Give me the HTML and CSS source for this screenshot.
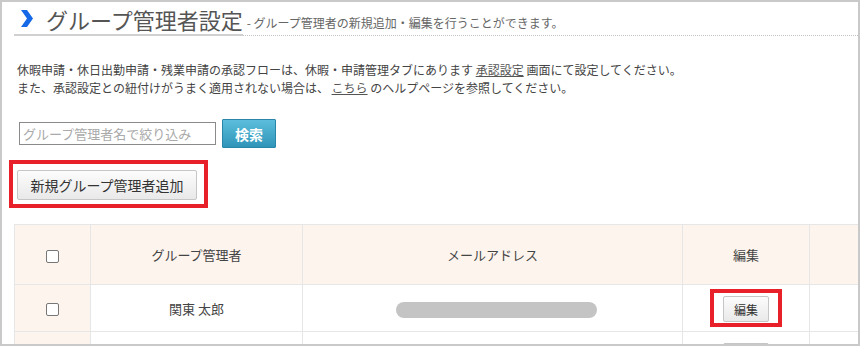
FILE: index.html
```html
<!DOCTYPE html>
<html lang="ja">
<head>
<meta charset="utf-8">
<title>グループ管理者設定</title>
<link rel="stylesheet" href="styles.css">
</head>
<body>
<div class="frame">
  <div class="heading">
    <h1 class="title">
      <svg class="chev" width="13" height="17" viewBox="0 0 13 17" aria-hidden="true"><path d="M1 0 L7 0 L13 8.5 L7 17 L1 17 L7 8.5 Z" fill="#1669e6"/></svg>
      <span>グループ管理者設定</span>
    </h1>
    <span class="sub">- グループ管理者の新規追加・編集を行うことができます。</span>
  </div>
  <div class="content">
    <p class="note">休暇申請・休日出勤申請・残業申請の承認フローは、休暇・申請管理タブにあります <a href="#">承認設定</a> 画面にて設定してください。<br>また、承認設定との紐付けがうまく適用されない場合は、 <a href="#">こちら</a> のヘルプページを参照してください。</p>
    <div class="search">
      <input class="filter" type="text" placeholder="グループ管理者名で絞り込み">
      <button class="btn-search" type="button">検索</button>
    </div>
    <div class="add-row">
      <button class="btn-plain btn-add mark mark-add" type="button">新規グループ管理者追加</button>
    </div>
  </div>
  <table class="list">
    <colgroup>
      <col class="c1"><col class="c2"><col class="c3"><col class="c4"><col class="c5">
    </colgroup>
    <thead>
      <tr>
        <th class="chk"><span class="box"></span></th>
        <th>グループ管理者</th>
        <th>メールアドレス</th>
        <th>編集</th>
        <th></th>
      </tr>
    </thead>
    <tbody>
      <tr>
        <td class="chk"><span class="box"></span></td>
        <td>関東 太郎</td>
        <td><span class="mask"></span></td>
        <td><button class="btn-plain btn-edit mark mark-edit" type="button">編集</button></td>
        <td></td>
      </tr>
      <tr>
        <td class="chk"><span class="box"></span></td>
        <td></td>
        <td></td>
        <td><button class="btn-plain btn-edit" type="button">編集</button></td>
        <td></td>
      </tr>
    </tbody>
  </table>
</div>
</body>
</html>
```

FILE: styles.css
```css
* { box-sizing: border-box; }
html, body { margin: 0; padding: 0; background: #fff; }
body {
  font-family: "Noto Sans CJK JP", "Noto Sans", sans-serif;
  color: #444;
}
.frame {
  width: 860px;
  height: 346px;
  border: 2px solid #c9c9c9;
  overflow: hidden;
  background: #fff;
}
.heading {
  margin: 0 0 0 12px;
  height: 34px;
  border-bottom: 1px dotted #c4c4c4;
  display: flex;
  align-items: flex-end;
}
.title {
  margin: 0 0 -1px 0;
  padding: 0 0 0 6px;
  height: 35px;
  display: flex;
  align-items: center;
  gap: 13px;
  font-size: 22px;
  font-weight: normal;
  color: #555;
  border-bottom: 2px solid #d0d0d0;
  line-height: 1;
}
.title span { padding-top: 2px; }
.chev { display: block; margin-top: 1px; }
.sub {
  font-size: 12px;
  color: #666;
  margin-left: 4px;
  padding-bottom: 6px;
  line-height: 1;
}
.content { padding: 0 0 0 15px; }
.note {
  margin: 25px 0 0 0;
  font-size: 12px;
  line-height: 18px;
  color: #444;
}
.note a { color: #555; text-decoration: underline; }
.search {
  display: flex;
  align-items: center;
  gap: 6px;
  margin: 22px 0 0 2px;
}
.filter {
  width: 197px;
  height: 23px;
  border: 1px solid #8a8a8a;
  padding: 0 3px;
  font-family: inherit;
  font-size: 13px;
  color: #444;
  outline: none;
}
.filter::placeholder { color: #aaa; }
.btn-search {
  width: 54px;
  height: 29px;
  border: 1px solid #2a86a8;
  border-radius: 1px;
  background: linear-gradient(#5cbedc, #2f95b8);
  color: #fff;
  font-family: inherit;
  font-size: 14px;
  font-weight: bold;
  padding: 0;
}
.add-row { margin-top: 22px; }
.btn-plain {
  border: 1px solid #c6c6c6;
  border-radius: 2px;
  background: linear-gradient(#fcfcfc, #e9e9e9);
  color: #333;
  font-family: inherit;
  padding: 0;
}
.btn-add {
  width: 180px;
  height: 30px;
  font-size: 14px;
}
.btn-edit {
  width: 46px;
  height: 26px;
  font-size: 12px;
}
.mark { position: relative; }
.mark::after {
  content: "";
  position: absolute;
  border: 4px solid #e8202a;
  pointer-events: none;
}
.mark-add::after { top: -11px; right: -12px; bottom: -9px; left: -9px; }
.mark-edit::after { top: -8px; right: -14px; bottom: -6px; left: -14px; }
.list {
  margin: 24px 0 0 12px;
  border-collapse: collapse;
  table-layout: fixed;
  width: 900px;
  font-size: 13px;
  color: #444;
}
.c1 { width: 76px; }
.c2 { width: 212px; }
.c3 { width: 380px; }
.c4 { width: 127px; }
.c5 { width: 105px; }
.list th, .list td {
  border: 1px solid #e6e6e6;
  text-align: center;
  vertical-align: middle;
  padding: 0;
  font-weight: normal;
}
.list thead tr { height: 60px; }
.list thead th { background: #fdf4ee; }
.list tbody tr { height: 47px; }
.list td { vertical-align: top; padding-top: 11px; }
.list td.chk, .list td:nth-child(2), .list td:nth-child(3) { vertical-align: middle; padding-top: 0; }
.list .chk { background: #fdf4ee; }
.box {
  display: inline-block;
  width: 13px;
  height: 13px;
  border: 1px solid #777;
  border-radius: 2px;
  background: #fff;
  vertical-align: middle;
}
.mask {
  display: inline-block;
  width: 201px;
  height: 16px;
  border-radius: 8px;
  background: #c4c4c4;
  vertical-align: middle;
  margin-left: 7px;
}
```
